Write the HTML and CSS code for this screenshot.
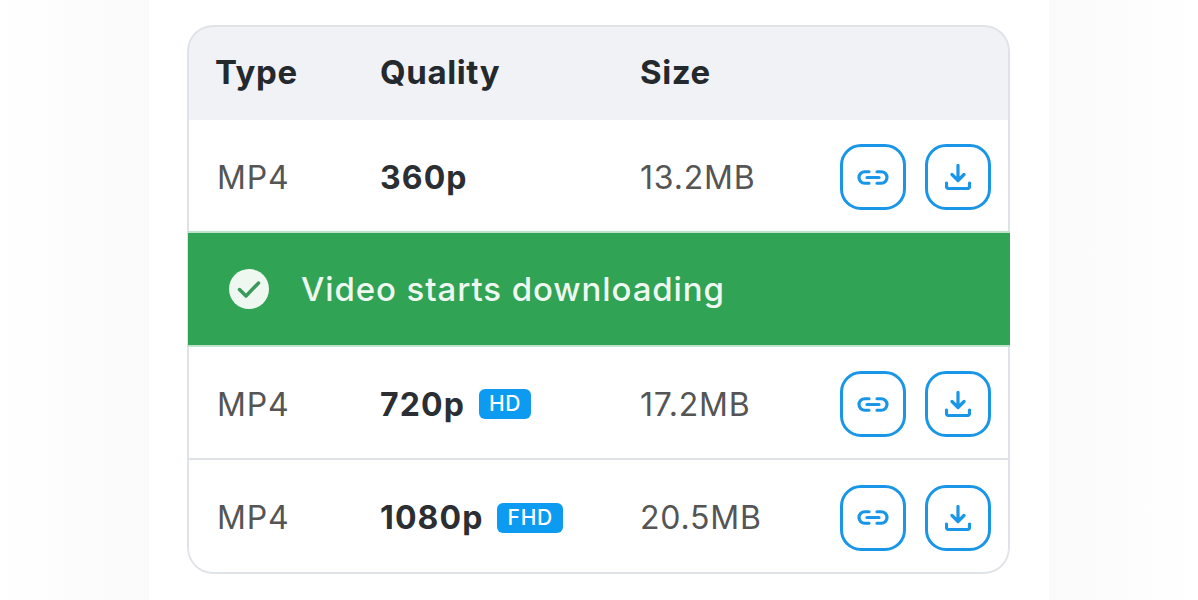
FILE: index.html
```html
<!DOCTYPE html>
<html>
<head>
  <meta charset="utf-8">
  <title>Video Downloads</title>
  <link rel="stylesheet" href="styles.css">
</head>
<body>
  <main class="panel">
    <div class="card">
      <div class="row head">
        <div class="col-type">Type</div>
        <div class="col-quality">Quality</div>
        <div class="col-size">Size</div>
      </div>

      <div class="row item">
        <div class="col-type">MP4</div>
        <div class="col-quality"><b>360p</b></div>
        <div class="col-size">13.2MB</div>
        <div class="actions">
          <button class="icon-btn" aria-label="Copy link">
            <svg viewBox="0 0 32 15" width="32" height="15"><path d="M12 1.750H7.750a5.750 5.750 0 0 0 0 11.500H12M20 1.750h4.250a5.750 5.750 0 0 1 0 11.500H20M10 7.500h12"/></svg>
          </button>
          <button class="icon-btn" aria-label="Download">
            <svg viewBox="0 0 26 26" width="26" height="26"><path d="M13 1.500V16M7 10.500l6 6 6-6M1.500 19v3.500a2 2 0 0 0 2 2h19a2 2 0 0 0 2-2V19"/></svg>
          </button>
        </div>
      </div>

      <div class="notice">
        <svg class="check" viewBox="0 0 40 40" width="40" height="40"><circle cx="20" cy="20" r="20" fill="#eef7f0"/><path d="M10.500 20.500l6.500 6.500L29.500 14" fill="none" stroke="#3a9a5c" stroke-width="3.500" stroke-linecap="round" stroke-linejoin="round"/></svg>
        <span>Video starts downloading</span>
      </div>

      <div class="row item">
        <div class="col-type">MP4</div>
        <div class="col-quality"><b>720p</b><span class="tag">HD</span></div>
        <div class="col-size">17.2MB</div>
        <div class="actions">
          <button class="icon-btn" aria-label="Copy link">
            <svg viewBox="0 0 32 15" width="32" height="15"><path d="M12 1.750H7.750a5.750 5.750 0 0 0 0 11.500H12M20 1.750h4.250a5.750 5.750 0 0 1 0 11.500H20M10 7.500h12"/></svg>
          </button>
          <button class="icon-btn" aria-label="Download">
            <svg viewBox="0 0 26 26" width="26" height="26"><path d="M13 1.500V16M7 10.500l6 6 6-6M1.500 19v3.500a2 2 0 0 0 2 2h19a2 2 0 0 0 2-2V19"/></svg>
          </button>
        </div>
      </div>

      <div class="row item last">
        <div class="col-type">MP4</div>
        <div class="col-quality"><b>1080p</b><span class="tag">FHD</span></div>
        <div class="col-size">20.5MB</div>
        <div class="actions">
          <button class="icon-btn" aria-label="Copy link">
            <svg viewBox="0 0 32 15" width="32" height="15"><path d="M12 1.750H7.750a5.750 5.750 0 0 0 0 11.500H12M20 1.750h4.250a5.750 5.750 0 0 1 0 11.500H20M10 7.500h12"/></svg>
          </button>
          <button class="icon-btn" aria-label="Download">
            <svg viewBox="0 0 26 26" width="26" height="26"><path d="M13 1.500V16M7 10.500l6 6 6-6M1.500 19v3.500a2 2 0 0 0 2 2h19a2 2 0 0 0 2-2V19"/></svg>
          </button>
        </div>
      </div>
    </div>
  </main>
</body>
</html>
```

FILE: styles.css
```css
* { margin: 0; padding: 0; box-sizing: border-box; }

body {
  height: 600px;
  overflow: hidden;
  font-family: "Inter", "Liberation Sans", sans-serif;
  background: linear-gradient(90deg, #ffffff 0, #fafafa 149px, #fafafa 1049px, #ffffff 100%);
  display: flex;
  justify-content: center;
}

.panel {
  width: 900px;
  height: 600px;
  background: #fff;
  padding: 25px 39px 0 38px;
}

.card {
  position: relative;
  width: 823px;
  height: 549px;
  border-radius: 26px;
  overflow: hidden;
  background: #fff;
}

/* outline sits on top so the green bar can run over it */
.card::after {
  content: "";
  position: absolute;
  inset: 0;
  border: 2px solid #dfe3e8;
  border-radius: 26px;
  pointer-events: none;
}

.row {
  display: flex;
  align-items: center;
  padding-left: 28px;
}

.col-type { width: 165px; }
.col-quality { width: 260px; display: flex; align-items: center; }
.col-size { width: 200px; }

.head {
  height: 95px;
  padding-bottom: 2px;
  background: #f0f2f6;
  font-size: 33px;
  font-weight: 700;
  color: #24292e;
  letter-spacing: 0.6px;
}

.item {
  height: 113px;
  padding-top: 3px;
  border-bottom: 2px solid #dfe3e8;
  font-size: 32px;
  color: #555;
  letter-spacing: 0.8px;
}
.item.last { height: 114px; padding-top: 1px; border-bottom: none; }
.item .col-type { padding-left: 2px; }

.item b {
  font-weight: 700;
  color: #2b2f33;
  letter-spacing: 1.1px;
}

.tag {
  margin-left: 14px;
  height: 30px;
  padding: 0 10px;
  border-radius: 6px;
  background: #0d9bf2;
  color: #fff;
  font-size: 21px;
  font-weight: 500;
  line-height: 30px;
  letter-spacing: 0.8px;
}

.actions {
  display: flex;
  gap: 19px;
}

.icon-btn {
  width: 66px;
  height: 66px;
  border: 3px solid #1a96e8;
  border-radius: 21px;
  background: #fff;
  display: flex;
  align-items: center;
  justify-content: center;
}

.icon-btn svg {
  fill: none;
  stroke: #1a96e8;
  stroke-width: 3.2;
  stroke-linecap: round;
  stroke-linejoin: round;
}

.notice {
  position: relative;
  z-index: 1;
  height: 116px;
  margin: -2px 0 0 1px;
  background: #31a354;
  border-bottom: 2px solid #bfe3ca;
  border-top: 2px solid #bfe3ca;
  display: flex;
  align-items: center;
  gap: 32px;
  padding-left: 41px;
  color: #eef7f0;
  font-size: 33px;
  font-weight: 500;
  letter-spacing: 0.9px;
}
```
